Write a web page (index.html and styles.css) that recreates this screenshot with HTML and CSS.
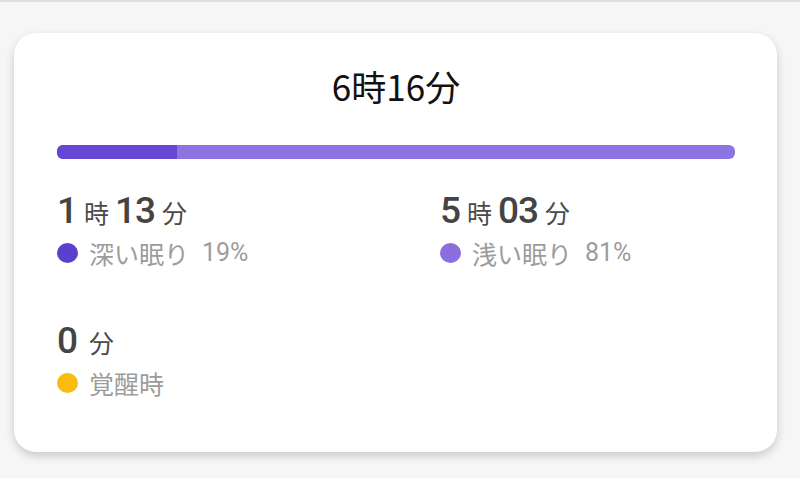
FILE: index.html
```html
<!DOCTYPE html>
<html lang="ja">
<head>
    <meta charset="utf-8" />
    <title>睡眠</title>
    <meta name="viewport" content="width=device-width, initial-scale=1.0">
    <link rel="stylesheet" href="styles.css">
</head>
<body>

<div class="sleep-card">
    <div class="total">6時16分</div>

    <div class="sleep-bar">
        <div class="sleep-bar-deep" style="width: 17.7%"></div>
    </div>

    <div class="stats">
        <div class="stat">
            <div class="stat-value"><b>1</b><span>時</span><b>13</b><span>分</span></div>
            <div class="stat-label"><i class="dot dot-deep"></i>深い眠り<em>19%</em></div>
        </div>
        <div class="stat">
            <div class="stat-value"><b>5</b><span>時</span><b>03</b><span>分</span></div>
            <div class="stat-label"><i class="dot dot-light"></i>浅い眠り<em>81%</em></div>
        </div>
        <div class="stat">
            <div class="stat-value"><b>0</b><span class="unit-spaced">分</span></div>
            <div class="stat-label"><i class="dot dot-awake"></i>覚醒時</div>
        </div>
    </div>
</div>

</body>
</html>
```

FILE: styles.css
```css
* {
    margin: 0;
    padding: 0;
    box-sizing: border-box;
}

body {
    font-family: Roboto, "Noto Sans CJK JP", sans-serif;
    background-color: #f6f6f6;
    border-top: 2px solid #dedede;
    height: 100vh;
    overflow: hidden;
    padding: 31px 23px 0 14px;
}

.sleep-card {
    background: #fff;
    border-radius: 22px;
    box-shadow: 0 4px 10px rgba(0, 0, 0, 0.18);
    height: 419px;
    padding: 33px 42px 0 43px;
}

.total {
    font-family: "Noto Sans CJK JP", sans-serif;
    font-size: 35px;
    line-height: 40px;
    text-align: center;
    color: #111;
}

.sleep-bar {
    height: 14px;
    margin-top: 39px;
    border-radius: 6px;
    background-color: #8c74e2;
    overflow: hidden;
}

.sleep-bar-deep {
    height: 100%;
    background-color: #6448d4;
}

.stats {
    display: grid;
    grid-template-columns: 383px 1fr;
    row-gap: 51px;
    margin-top: 30px;
}

.stat-value {
    color: #444;
    line-height: 44px;
}

.stat-value b {
    font-weight: 500;
    font-size: 37px;
    letter-spacing: -1px;
}

.stat-value span {
    font-family: "Noto Sans CJK JP", sans-serif;
    font-size: 25px;
    margin: 0 6px 0 7px;
    color: #4a4a4a;
}

.stat-value .unit-spaced {
    margin-left: 12px;
}

.stat-label {
    display: flex;
    align-items: center;
    font-size: 25px;
    line-height: 30px;
    margin-top: -2px;
    color: #9c9c9c;
    font-family: "Noto Sans CJK JP", sans-serif;
}

.stat-label em {
    font-style: normal;
    font-family: Roboto, sans-serif;
    margin-left: 13px;
}

.dot {
    width: 21px;
    height: 20px;
    border-radius: 50%;
    margin-right: 11px;
}

.dot-deep {
    background-color: #5b3fcf;
}

.dot-light {
    background-color: #8b6fdf;
}

.dot-awake {
    background-color: #f8bc0c;
}
```
